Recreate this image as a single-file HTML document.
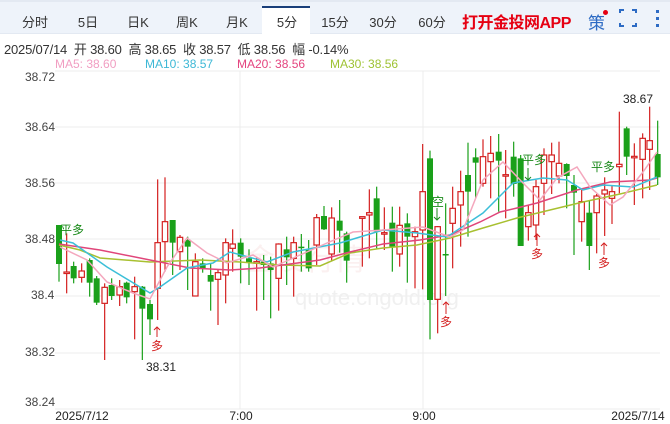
<!DOCTYPE html>
<html><head><meta charset="utf-8"><style>
*{margin:0;padding:0;box-sizing:border-box}
body{width:670px;height:424px;background:#fff;font-family:"Liberation Sans","Noto Sans CJK SC",sans-serif;position:relative;overflow:hidden;color:#333}
.tabs{position:absolute;left:0;top:0;width:670px;height:34px;background:#eef3fa;border-top:2px solid #e3e9f2;border-bottom:1px solid #e3e9f2}
.tab{position:absolute;top:10px;font-size:13px;color:#333;transform:translateX(-50%)}
.act{position:absolute;left:262px;top:4px;width:48px;height:31px;background:#fff;border-top:2px solid #1a3f7a}
.app{position:absolute;left:462px;top:7px;font-size:16px;font-weight:bold;color:#e60012;letter-spacing:-0.5px}
.ce{position:absolute;left:588px;top:7px;font-size:17px;color:#2d6bc4}
.dot{position:absolute;left:603px;top:8px;width:5px;height:5px;border-radius:50%;background:#e60012}
.info{position:absolute;left:4px;top:39px;font-size:13px;color:#333;white-space:nowrap;letter-spacing:-0.2px}
.ma{position:absolute;top:57px;font-size:12px;white-space:nowrap}
.yl{position:absolute;left:25px;font-size:12px;color:#444}
.xl{position:absolute;top:409px;font-size:12px;color:#222;transform:translateX(-50%)}
svg{position:absolute;left:0;top:0}
</style></head><body>
<div class="tabs">
<div class="act"></div>
<span class="tab" style="left:35px">分时</span>
<span class="tab" style="left:88px">5日</span>
<span class="tab" style="left:138px">日K</span>
<span class="tab" style="left:187px">周K</span>
<span class="tab" style="left:237px">月K</span>
<span class="tab" style="left:287px">5分</span>
<span class="tab" style="left:335px">15分</span>
<span class="tab" style="left:383px">30分</span>
<span class="tab" style="left:432px">60分</span>
<span class="app">打开金投网APP</span>
<span class="ce">策</span><span class="dot"></span>
<svg width="670" height="34" style="position:absolute;left:0;top:0">
<path d="M620 11v-3h4M632 8h4v3M636 21v3h-4M624 24h-4v-3" stroke="#2d6bc4" stroke-width="2" fill="none"/>
<rect x="656" y="8" width="3" height="3" fill="#2d6bc4"/><rect x="656" y="15" width="3" height="3" fill="#2d6bc4"/><rect x="656" y="22" width="3" height="3" fill="#2d6bc4"/>
</svg>
</div>
<div class="info">2025/07/14 &nbsp;开 38.60 &nbsp;高 38.65 &nbsp;收 38.57 &nbsp;低 38.56 &nbsp;幅 -0.14%</div>
<div class="ma" style="left:55px;color:#f19ec2">MA5: 38.60</div>
<div class="ma" style="left:145px;color:#3db8d6">MA10: 38.57</div>
<div class="ma" style="left:237px;color:#e4447f">MA20: 38.56</div>
<div class="ma" style="left:330px;color:#9ec232">MA30: 38.56</div>
<svg id="c" width="670" height="424"></svg>
<div class="yl" style="top:70px">38.72</div>
<div class="yl" style="top:120px">38.64</div>
<div class="yl" style="top:176px">38.56</div>
<div class="yl" style="top:232px">38.48</div>
<div class="yl" style="top:288px;left:31px">38.4</div>
<div class="yl" style="top:345px">38.32</div>
<div class="yl" style="top:395px">38.24</div>
<div class="xl" style="left:82px">2025/7/12</div>
<div class="xl" style="left:241px">7:00</div>
<div class="xl" style="left:424px">9:00</div>
<div class="xl" style="left:638px">2025/7/14</div>
<div style="position:absolute;left:146px;top:360px;font-size:12px;color:#222">38.31</div>
<div style="position:absolute;left:623px;top:92px;font-size:12px;color:#222">38.67</div>
<script>
var s='';
[71,127,183,239,296,353,409].forEach(function(y){s+='<line x1="55" x2="660" y1="'+y+'" y2="'+y+'" stroke="#ececec"/>';});
[240,423].forEach(function(x){s+='<line x1="'+x+'" x2="'+x+'" y1="71" y2="409" stroke="#ececec"/>';});
s+='<text x="295" y="305" font-size="22" fill="#f0f0f0" font-family="Liberation Sans">quote.cngold.org</text>';
s+='<text x="245" y="270" font-size="30" fill="#fbf0f0" font-family="Noto Sans CJK SC">金投行情</text>';
var A=[[57,'g',405,405,522,575],[80,'r',430,546,550,610],[101,'g',515,528,565,580],[125,'r',520,543,562,578],[149,'g',505,510,578,620],[170,'g',558,565,638,645],[194,'r',580,592,640,810],[215,'g',565,585,618,630],[239,'r',570,590,615,648],[260,'g',575,578,622,640],[284,'r',560,590,605,748],[307,'g',588,590,656,810],[330,'g',630,642,688,735],[353,'r',268,458,595,690],[375,'r',262,395,455,545],[398,'g',390,390,458,555],[420,'r',435,442,485,540],[443,'g',440,450,470,600],[466,'r',490,515,618,618],[488,'g',505,520,535,548],[512,'g',520,555,575,662],[534,'r',540,548,568,705],[557,'r',445,458,555,640],[578,'r',418,462,475,545],[602,'g',445,458,500,580],[627,'g',478,505,518,585],[650,'r',500,515,518,662],[671,'g',495,515,525,630],[692,'g',500,520,540,685],[716,'r',460,462,565,662],[740,'g',440,478,502,585],[761,'r',440,458,505,620],[784,'g',432,470,472,545],[806,'g',450,480,535,545],[830,'r',372,383,465,525],[852,'g',348,378,418,420],[875,'r',352,384,492,512],[899,'g',330,392,422,488],[920,'g',425,430,512,578]];
var B=[[13,'g',385,402,445,538],[37,'r',380,380,385,530],[58,'r',298,368,375,505],[80,'g',290,325,425,475],[103,'r',352,428,430,480],[127,'g',350,398,470,545],[149,'r',350,406,492,530],[172,'g',370,400,440,578],[195,'r',410,425,440,595],[218,'r',162,305,420,598],[240,'g',182,205,630,748],[263,'r',408,410,628,730],[287,'g',340,492,494,618],[308,'r',290,355,400,535],[332,'r',242,305,345,470],[354,'g',158,255,305,440],[377,'g',175,202,218,325],[399,'r',148,200,280,290],[422,'r',138,190,215,325],[446,'g',132,185,212,365],[467,'r',180,254,257,385],[491,'g',155,200,282,320],[512,'g',195,205,468,468],[535,'r',345,368,410,452],[558,'r',270,290,405,450],[582,'r',175,195,280,375],[605,'r',158,195,215,312],[627,'r',155,220,258,280],[650,'g',220,222,258,355],[672,'g',255,285,308,495],[695,'r',300,335,395,455],[718,'g',330,368,468,540],[740,'r',312,318,368,490],[764,'r',262,300,312,438],[786,'r',285,305,325,402],[808,'r',65,223,230,310],[830,'g',110,115,200,255],[853,'r',160,199,203,345],[878,'r',130,145,208,325],[899,'r',50,152,178,300],[923,'g',92,192,262,285]];
function draw(c,ox){var x=ox+c[0]/3,y=function(v){return 90+v/3};
 var col=c[1]=='g'?'#1aa01a':'#d42020';
 s+='<line x1="'+x+'" x2="'+x+'" y1="'+y(c[2])+'" y2="'+y(c[5])+'" stroke="'+col+'" stroke-width="1.2"/>';
 var t=y(c[3]),b=Math.max(y(c[4]),t+1.5);
 if(c[1]=='g')s+='<rect x="'+(x-3)+'" y="'+t+'" width="6" height="'+(b-t)+'" fill="'+col+'"/>';
 else s+='<rect x="'+(x-2.7)+'" y="'+t+'" width="5.4" height="'+(b-t)+'" fill="#fff" stroke="'+col+'" stroke-width="1.2"/>';}
A.forEach(function(c){draw(c,40)});B.slice(1).forEach(function(c){draw(c,350)});
function pl(p,c){s+='<polyline points="'+p+'" fill="none" stroke="'+c+'" stroke-width="1.5"/>';}
pl('59,245 80,250 100,258 150,262 200,260 240,262 280,265 320,266 350,253 383,248 417,245 450,238 483,228 517,218 550,210 583,202 620,194 657,185','#a8c030');
pl('59,244 100,250 150,260 190,268 230,270 260,268 290,264 320,260 350,252 383,244 420,240 450,235 480,222 500,212 517,208 537,203 577,190 610,182 650,180 657,178','#e0467a');
pl('60,240 73,243 107,267 150,293 160,287 187,268 213,263 230,252 267,262 293,252 340,243 350,240 383,230 417,233 447,237 483,213 513,183 543,178 567,180 583,190 603,185 633,187 657,177','#3cbfd8');
pl('60,247 87,260 107,282 133,293 150,299 167,267 187,238 207,253 227,263 253,255 273,267 300,255 327,243 353,232 383,230 423,227 450,237 463,230 483,180 503,162 523,183 540,200 557,178 577,167 590,187 610,205 623,197 643,172 657,152','#f4a7bd');
function tx(x,y,t,c){s+='<text x="'+x+'" y="'+y+'" font-size="12" fill="'+c+'" font-family="Noto Sans CJK SC">'+t+'</text>';}
function arr(x,y1,y2,c,up){s+='<line x1="'+x+'" x2="'+x+'" y1="'+y1+'" y2="'+y2+'" stroke="'+c+'"/>';
 var ty=up?y1:y2,d=up?3:-3;s+='<polyline points="'+(x-3)+','+(ty+d)+' '+x+','+ty+' '+(x+3)+','+(ty+d)+'" fill="none" stroke="'+c+'"/>';}
tx(60,234,'平多','#1a8a1a');
arr(157,327,337,'#d42020',1);tx(151,350,'多','#d42020');
tx(432,206,'空','#1a8a1a');arr(437,208,220,'#1a8a1a',0);
arr(446,302,314,'#d42020',1);tx(440,326,'多','#d42020');
tx(522,164,'平多','#1a8a1a');arr(528,168,180,'#1a8a1a',0);
arr(537,234,246,'#d42020',1);tx(531,258,'多','#d42020');
tx(591,171,'平多','#1a8a1a');
arr(604,243,255,'#d42020',1);tx(598,267,'多','#d42020');
document.getElementById('c').innerHTML=s;
</script>
</body></html>
